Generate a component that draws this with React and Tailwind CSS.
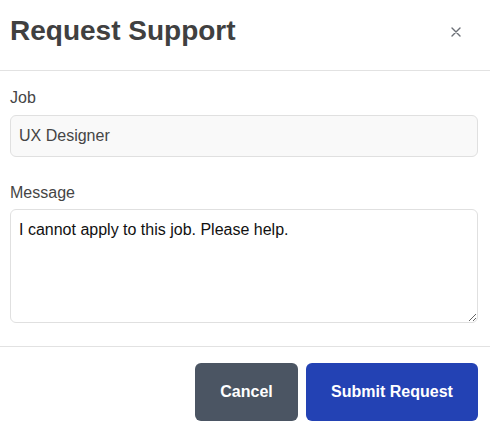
import React from "react";

export default function App() {
  return (
    <div className="w-[490px] h-[442px] bg-white overflow-hidden" style={{ fontFamily: '"Liberation Sans", Arial, sans-serif' }}>
      <div className="h-[71px] border-b border-[#e2e2e2] pl-[10px] pr-[27px] pt-[14px] flex items-start justify-between">
        <h1 className="text-[28px] leading-[34px] font-bold text-[#404040]">Request Support</h1>
        <button className="mt-[11px] w-[14px] h-[14px] flex items-center justify-center text-[#6b6f76]">
          <svg width="10" height="10" viewBox="0 0 10 10" fill="none" stroke="currentColor" strokeWidth="1.4" strokeLinecap="round">
            <path d="M1 1L9 9M9 1L1 9" />
          </svg>
        </button>
      </div>
      <div className="pl-[10px] pr-[12px] pt-[15px] pb-[23px] border-b border-[#e2e2e2]">
        <label className="block text-[16px] leading-[24px] text-[#454545] mb-[5px]">Job</label>
        <div className="h-[42px] rounded-[6px] border border-[#e0e0e0] bg-[#f9f9f9] px-[8px] flex items-center text-[16px] leading-[24px] text-[#454545]">
          UX Designer
        </div>
        <label className="block mt-[24px] text-[16px] leading-[24px] text-[#454545] mb-[4px]">Message</label>
        <textarea
          className="block w-full h-[114px] rounded-[6px] border border-[#e0e0e0] bg-white px-[8px] py-[8px] text-[16px] leading-[24px] text-[#111] outline-none resize-y"
          defaultValue="I cannot apply to this job. Please help."
          style={{ fontFamily: '"Liberation Sans", Arial, sans-serif' }}
        />
      </div>
      <div className="pl-[10px] pr-[12px] pt-[16px] flex justify-end gap-[8px]">
        <button className="w-[103px] h-[58px] rounded-[6px] bg-[#4b5563] text-white font-bold text-[16px]">Cancel</button>
        <button className="w-[172px] h-[58px] rounded-[6px] bg-[#2342b4] text-white font-bold text-[16px]">Submit Request</button>
      </div>
    </div>
  );
}
